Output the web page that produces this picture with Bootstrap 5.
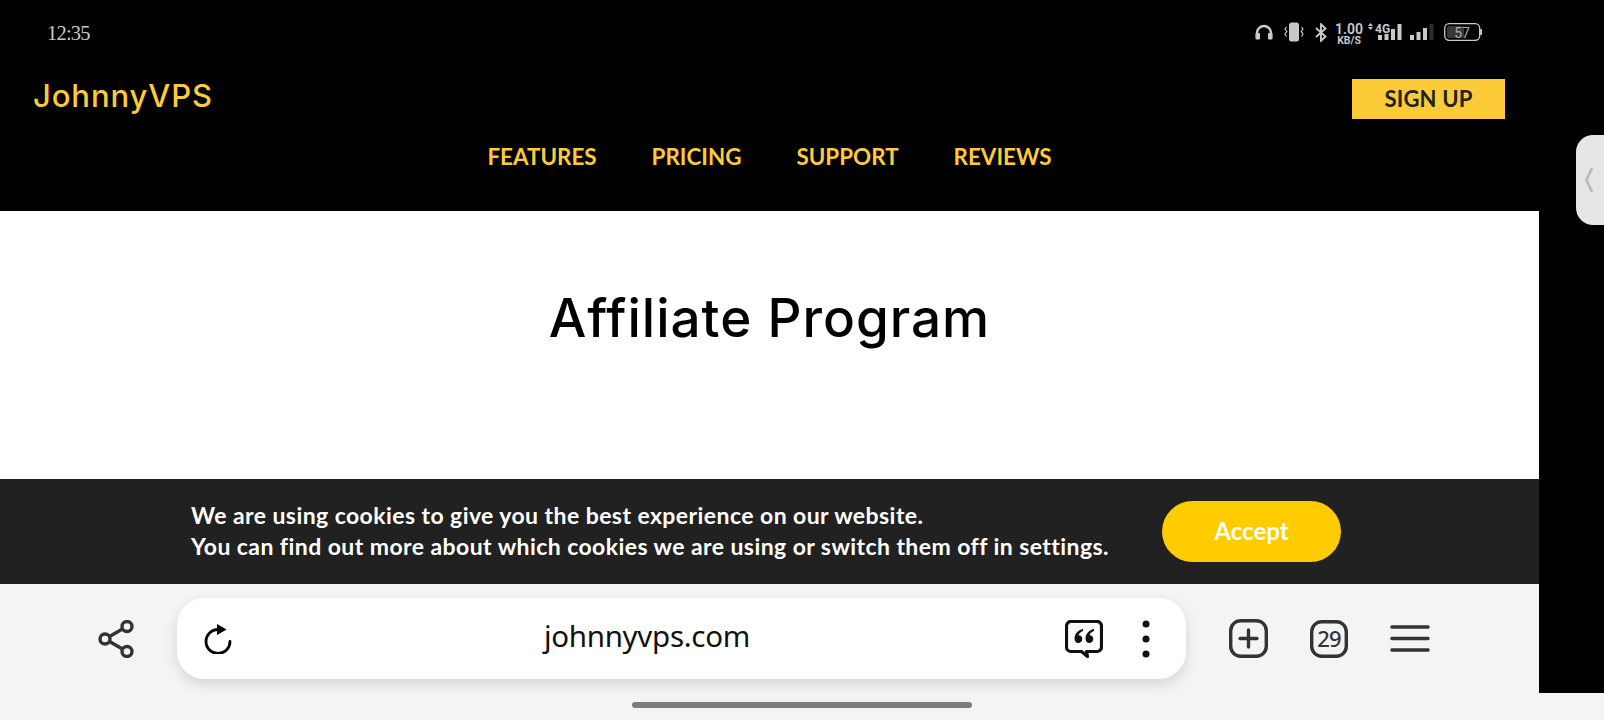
<!doctype html>
<html lang="en">
<head>
<meta charset="utf-8">
<title>JohnnyVPS</title>
<link href="https://cdn.jsdelivr.net/npm/bootstrap@5.3.0/dist/css/bootstrap.min.css" rel="stylesheet">
<style>
html,body{height:720px;overflow:hidden}
body{background:#f4f4f4;font-family:"Noto Sans",sans-serif;position:relative}
.screen-top{height:693px}
.page-col{width:1539px}
.rail{width:65px;background:#000}
.site-head{background:#000;height:211px;padding:0 34px}
.status-row{height:64px;margin:0 -34px;padding:0 57px 0 47px;color:#c9c9c9}
.clock{font:20.5px/1 "Liberation Serif",serif;letter-spacing:-.8px;padding-top:2px}
.status-icons{height:24px}
.status-icons svg{display:block;flex:none}
.si-head{margin-left:0}
.si-vib{margin-left:11px}
.si-bt{margin-left:11px}
.si-net{margin-left:5px}
.si-bat{margin-left:10px}
.speed{font:600 14px/10px "Roboto",sans-serif;text-align:center;width:28px;margin:4px 0 0 8px}
.speed small{display:block;font-size:10.5px;line-height:8px;margin-top:3px;font-weight:700}
.brand-row{height:55px;padding-top:15px}
.brand-name{font:500 31px/34px "Inter",sans-serif;color:#fdcb38;text-decoration:none;letter-spacing:.9px;margin-left:-1px}
.signup{background:#fdcb38;color:#222;border:0;border-radius:0;height:40px;width:153px;padding:0;font:700 22px/40px "Lato",sans-serif;letter-spacing:.2px}
.site-nav{height:38px;margin-top:19px;gap:55px}
.site-nav a{font:700 22.4px/38px "Lato",sans-serif;color:#fdcb38;text-decoration:none}
.hero{height:268px;background:#fff;padding-top:72px}
.hero h1{font:500 53px/70px "Inter",sans-serif;color:#000;margin:0;letter-spacing:1px}
.cookie-bar{height:105px;background:#212121;padding-left:191px;color:#fff}
.cookie-copy{font:700 23px/31px "Lato",sans-serif;width:971px;letter-spacing:.43px;margin-top:-2px}
.accept{width:179px;height:61px;border-radius:31px;background:#fc0;color:#fff;border:0;font:700 24px/58px "Lato",sans-serif;padding:0 0 2px}
.browser-bar{height:109px;background:#f4f4f4;padding-left:98px}
.share-icon{margin-top:36px}
.url-pill{width:1009px;height:81px;background:#fff;border-radius:27px;margin:14px 0 0 43px;box-shadow:0 5px 14px rgba(0,0,0,.13);padding:0 0 0 27px}
.url-text{font:400 29.5px/1 "Noto Sans",sans-serif;color:#111;width:830px;text-align:center;margin-top:-6px;letter-spacing:-.3px}
.url-pill .quote{margin-left:3px}
.url-pill .dots{margin-left:39px}
.tool-icons{margin:0 0 0 43px;gap:42px;padding-top:35px}
.tab-label{font:500 22px "Noto Sans",sans-serif;fill:#333;letter-spacing:-.8px}
.home-strip{height:27px}
.home-bar{width:340px;height:6px;border-radius:3px;background:#7d7d7d;margin-top:9px}
.edge-handle{position:absolute;right:0;top:135px;width:28px;height:90px;background:#e6e6e6;border-radius:17px 0 0 17px}
.edge-handle svg{position:absolute;left:8px;top:31px}
</style>
</head>
<body>
<div class="screen-top d-flex">
  <div class="page-col d-flex flex-column">
    <header class="site-head">
      <div class="status-row d-flex align-items-center justify-content-between">
        <span class="clock">12:35</span>
        <div class="status-icons d-flex align-items-center">
          <svg class="si-head" width="18" height="16" viewBox="0 0 18 16"><path d="M2 14V9a7 7 0 0 1 14 0v5" fill="none" stroke="#c9c9c9" stroke-width="2.4"/><rect x="0.500" y="9" width="4.500" height="6.500" rx="1" fill="#c9c9c9"/><rect x="13" y="9" width="4.500" height="6.500" rx="1" fill="#c9c9c9"/></svg>
          <svg class="si-vib" width="20" height="20" viewBox="0 0 20 20" fill="none"><rect x="5" y="0.500" width="10" height="19" rx="2.500" fill="#c9c9c9"/><path d="M2.500 5l-1.500 2 1.800 2.500L1 12l1.500 2.500M17.500 5L19 7l-1.800 2.500L19 12l-1.500 2.500" stroke="#c9c9c9" stroke-width="1.200"/></svg>
          <svg class="si-bt" width="12" height="19" viewBox="0 0 12 19" fill="none"><path d="M1 5l9.500 8.500L6 17.800V1.200l4.500 4.300L1 14" stroke="#c9c9c9" stroke-width="1.900"/></svg>
          <div class="speed">1.00<small>KB/S</small></div>
          <svg class="si-net" width="66" height="18" viewBox="0 0 66 18" fill="#c9c9c9"><path d="M2.500 0L5 3H0zM0 4h5L2.500 7z"/><text x="7" y="9.500" font-family="Roboto,sans-serif" font-weight="700" font-size="12">4G</text><rect x="10" y="12" width="4" height="5"/><rect x="16.500" y="11" width="4" height="6"/><rect x="23" y="6" width="4" height="11"/><rect x="29.500" y="1" width="4" height="16"/><rect x="42" y="12" width="4" height="5"/><rect x="48.500" y="9" width="4" height="8"/><rect x="55" y="5" width="4" height="12"/><rect x="61.500" y="1" width="4" height="16" fill="#2c2c2c"/></svg>
          <svg class="si-bat" width="38" height="18" viewBox="0 0 38 18"><rect x="0.700" y="0.700" width="35" height="16.600" rx="4.500" fill="none" stroke="#c9c9c9" stroke-width="1.300"/><rect x="3" y="3" width="17" height="12" rx="2" fill="#383838"/><rect x="36" y="6" width="2" height="6" rx="1" fill="#c9c9c9"/><text x="18" y="14.500" text-anchor="middle" font-family="Roboto,sans-serif" font-size="14" fill="#aaa">57</text></svg>
        </div>
      </div>
      <div class="brand-row d-flex justify-content-between align-items-start">
        <a class="brand-name" href="#">JohnnyVPS</a>
        <button class="btn signup" type="button">SIGN UP</button>
      </div>
      <nav class="site-nav d-flex justify-content-center">
        <a href="#">FEATURES</a><a href="#">PRICING</a><a href="#">SUPPORT</a><a href="#">REVIEWS</a>
      </nav>
    </header>
    <section class="hero text-center"><h1>Affiliate Program</h1></section>
    <section class="cookie-bar d-flex align-items-center">
      <div class="cookie-copy">We are using cookies to give you the best experience on our website.<br>You can find out more about which cookies we are using or switch them off in settings.</div>
      <button class="btn accept" type="button">Accept</button>
    </section>
    <section class="browser-bar d-flex align-items-start">
      <svg class="share-icon" width="36" height="38" viewBox="0 0 36 38" fill="none" stroke="#333" stroke-width="3.400"><circle cx="7" cy="19" r="5"/><circle cx="29" cy="6.500" r="5"/><circle cx="29" cy="31.500" r="5"/><path d="M11.500 16.500L24.500 9M11.500 21.500L24.500 29"/></svg>
      <div class="url-pill d-flex align-items-center">
        <svg width="28" height="30" viewBox="0 0 28 30" fill="none"><path d="M26 17.500A12 12 0 1 1 14 5.500" stroke="#000" stroke-width="2.800" stroke-linecap="round"/><path d="M13 0l9.500 5.500L13 11z" fill="#000"/></svg>
        <div class="url-text">johnnyvps.com</div>
        <svg class="quote" width="38" height="38" viewBox="0 0 38 38" fill="none"><path d="M6 1.500h26a4.500 4.500 0 0 1 4.500 4.500v21a4.500 4.500 0 0 1-4.500 4.500H21.500l1 5-6-5H6A4.500 4.500 0 0 1 1.500 27V6A4.500 4.500 0 0 1 6 1.500z" stroke="#111" stroke-width="3.200" stroke-linejoin="round"/><path d="M18 9c-5 1-8.500 5-8.500 9.500 0 2.500 1.500 4.500 3.800 4.500s4-1.700 4-4-1.500-3.700-3.700-3.700c.3-2 2.200-3.600 4.400-4.300zM29 9c-5 1-8.500 5-8.500 9.500 0 2.500 1.500 4.500 3.800 4.500s4-1.700 4-4-1.500-3.700-3.700-3.700c.3-2 2.200-3.600 4.400-4.300z" fill="#111"/></svg>
        <svg class="dots" width="8" height="38" viewBox="0 0 8 38" fill="#111"><circle cx="4" cy="4" r="3.500"/><circle cx="4" cy="19" r="3.500"/><circle cx="4" cy="34" r="3.500"/></svg>
      </div>
      <div class="tool-icons d-flex align-items-center">
        <svg width="39" height="39" viewBox="0 0 39 39" fill="none" stroke="#333" stroke-width="3.400"><rect x="1.700" y="1.700" width="35.600" height="35.600" rx="10"/><path d="M19.500 11v17M11 19.500h17" stroke-linecap="round"/></svg>
        <svg width="38" height="38" viewBox="0 0 38 38" fill="none"><rect x="1.700" y="1.700" width="34.600" height="34.600" rx="10" stroke="#333" stroke-width="3.400"/><text class="tab-label" x="19" y="27" text-anchor="middle">29</text></svg>
        <svg width="40" height="27" viewBox="0 0 40 27" stroke="#333" stroke-width="3.600" stroke-linecap="round"><path d="M2 2h36M2 13.500h36M2 25h36"/></svg>
      </div>
    </section>
  </div>
  <div class="rail"></div>
</div>
<div class="home-strip d-flex justify-content-center"><div class="home-bar"></div></div>
<div class="edge-handle"><svg width="10" height="28" viewBox="0 0 10 28" fill="none"><path d="M8 2L2.500 14 8 26" stroke="#bdbdbd" stroke-width="3"/></svg></div>
<script src="https://cdn.jsdelivr.net/npm/bootstrap@5.3.0/dist/js/bootstrap.bundle.min.js"></script>
</body>
</html>
